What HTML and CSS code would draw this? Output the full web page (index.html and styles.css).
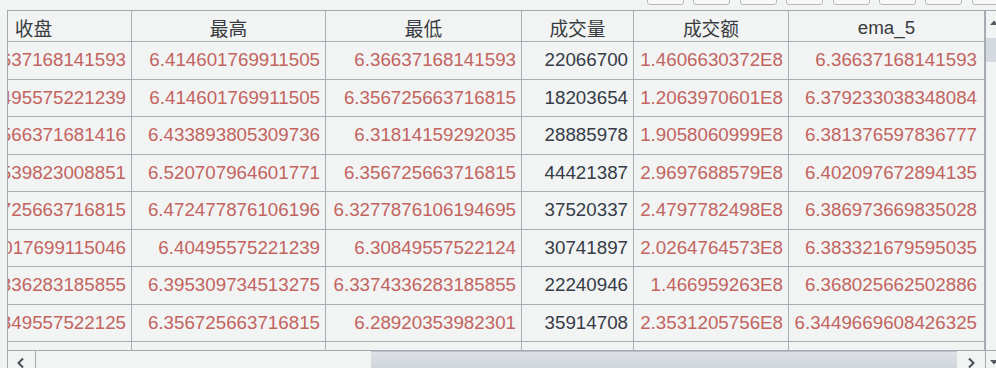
FILE: index.html
```html
<!DOCTYPE html>
<html lang="zh">
<head>
<meta charset="utf-8">
<title>行情数据</title>
<link rel="stylesheet" href="styles.css">
</head>
<body>
<div class="toolbar">
  <span class="tb-btn"></span><span class="tb-btn"></span><span class="tb-btn"></span><span class="tb-btn"></span>
  <span class="tb-btn"></span><span class="tb-btn"></span><span class="tb-btn"></span><span class="tb-btn"></span>
</div>
<div class="pane">
  <div class="viewport">
    <table class="grid">
      <thead>
        <tr>
          <th class="w-close">收盘</th>
          <th class="w-high">最高</th>
          <th class="w-low">最低</th>
          <th class="w-vol">成交量</th>
          <th class="w-amt">成交额</th>
          <th class="w-ema">ema_5</th>
        </tr>
      </thead>
      <tbody>
        <tr><td>6.36637168141593</td><td>6.414601769911505</td><td>6.36637168141593</td><td class="vol">22066700</td><td>1.4606630372E8</td><td class="last">6.36637168141593</td></tr>
        <tr><td>6.40495575221239</td><td>6.414601769911505</td><td>6.356725663716815</td><td class="vol">18203654</td><td>1.2063970601E8</td><td class="last">6.379233038348084</td></tr>
        <tr><td>6.38566371681416</td><td>6.433893805309736</td><td>6.31814159292035</td><td class="vol">28885978</td><td>1.9058060999E8</td><td class="last">6.381376597836777</td></tr>
        <tr><td>6.443539823008851</td><td>6.520707964601771</td><td>6.356725663716815</td><td class="vol">44421387</td><td>2.9697688579E8</td><td class="last">6.402097672894135</td></tr>
        <tr><td>6.356725663716815</td><td>6.472477876106196</td><td>6.3277876106194695</td><td class="vol">37520337</td><td>2.4797782498E8</td><td class="last">6.386973669835028</td></tr>
        <tr><td>6.376017699115046</td><td>6.40495575221239</td><td>6.30849557522124</td><td class="vol">30741897</td><td>2.0264764573E8</td><td class="last">6.383321679595035</td></tr>
        <tr><td>6.3374336283185855</td><td>6.395309734513275</td><td>6.3374336283185855</td><td class="vol">22240946</td><td>1.466959263E8</td><td class="last">6.368025662502886</td></tr>
        <tr><td>6.298849557522125</td><td>6.356725663716815</td><td>6.28920353982301</td><td class="vol">35914708</td><td>2.3531205756E8</td><td class="last">6.3449669608426325</td></tr>
        <tr><td>6.318141592920354</td><td>6.347079646017699</td><td>6.28920353982301</td><td class="vol">26411523</td><td>1.6876431982E8</td><td class="last">6.336025171535206</td></tr>
      </tbody>
    </table>
  </div>
  <div class="vscroll">
    <div class="vbtn-up">
      <svg width="8" height="5" viewBox="0 0 8 5"><polygon points="0,5 4,0.5 8,5" fill="#555b60"/></svg>
    </div>
    <div class="vtrack"><div class="vthumb"></div></div>
    <div class="vbtn-down">
      <svg width="8" height="5" viewBox="0 0 8 5"><polygon points="0,0 8,0 4,4.5" fill="#555b60"/></svg>
    </div>
  </div>
  <div class="hscroll">
    <div class="hbtn hbtn-left">
      <svg width="9" height="12" viewBox="0 0 9 12"><polyline points="7,1.5 2.5,6 7,10.5" fill="none" stroke="#4a4f54" stroke-width="2"/></svg>
    </div>
    <div class="htrack"><div class="hthumb"></div></div>
    <div class="hbtn hbtn-right">
      <svg width="9" height="12" viewBox="0 0 9 12"><polyline points="2,1.5 6.5,6 2,10.5" fill="none" stroke="#4a4f54" stroke-width="2"/></svg>
    </div>
  </div>
</div>
</body>
</html>
```
FILE: styles.css
```css
* {
  box-sizing: border-box;
}

html,
body {
  margin: 0;
  height: 100%;
  overflow: hidden;
  background: #f2f3f3;
}

body {
  font-family: "Liberation Sans", "Noto Sans CJK SC", sans-serif;
  font-size: 18.75px;
  color: #333333;
}

/* bottoms of the toolbar buttons above the table */
.toolbar {
  display: flex;
  align-items: flex-end;
  gap: 9.4px;
  height: 5px;
  padding-left: 647px;
  margin-bottom: 5px;
  overflow: hidden;
}

.tb-btn {
  flex: 0 0 37px;
  height: 24px;
  border: 1px solid #b5b9bc;
  border-radius: 3px;
  background: #f8f8f8;
}

/* scroll pane */
.pane {
  margin-left: 7px;
  width: max-content;
  display: grid;
  grid-template-columns: 977px 17px;
  grid-template-rows: 339px 18px;
  border-left: 1px solid #a3a9ae;
  border-top: 1px solid #a3a9ae;
}

.viewport {
  grid-column: 1;
  grid-row: 1;
  overflow: hidden;
}

.grid {
  margin-left: -72px;
  width: 1049px;
  table-layout: fixed;
  border-collapse: separate;
  border-spacing: 0;
}

.grid th,
.grid td {
  border-right: 1px solid #a8aeb3;
  border-bottom: 1px solid #a8aeb3;
  white-space: nowrap;
  padding: 0 5px;
}

.grid th {
  height: 30px;
  padding-top: 3px;
  font-weight: normal;
  text-align: center;
  color: #383c40;
}

.grid td {
  height: 37.5px;
  text-align: right;
  color: #c2645f;
}

.grid td.vol {
  color: #353c47;
}

.grid td.last {
  padding-right: 7px;
}

.w-close { width: 196px; }
.w-high  { width: 194px; }
.w-low   { width: 196px; }
.w-vol   { width: 112px; }
.w-amt   { width: 155px; }
.w-ema   { width: 196px; }

/* vertical scrollbar */
.vscroll {
  grid-column: 2;
  grid-row: 1 / 3;
  border-left: 1px solid #a3a9ae;
  display: flex;
  flex-direction: column;
}

.vbtn-up {
  height: 27px;
  display: flex;
  justify-content: center;
  padding-top: 9px;
}

.vtrack {
  flex: 1;
}

.vthumb {
  height: 24px;
  background: #d4dadf;
}

.vbtn-down {
  height: 18px;
  border-top: 1px solid #a3a9ae;
  display: flex;
  justify-content: center;
  padding-top: 9px;
}

/* horizontal scrollbar */
.hscroll {
  grid-column: 1;
  grid-row: 2;
  border-top: 1px solid #a3a9ae;
  display: flex;
}

.hbtn {
  flex: 0 0 28px;
  display: flex;
  justify-content: center;
  padding-top: 6px;
}

.hbtn-left {
  border-right: 1px solid #a3a9ae;
  padding-right: 3px;
}

.htrack {
  flex: 1;
  display: flex;
}

.hthumb {
  margin-left: auto;
  width: 586px;
  border-top: 1px solid #b9c0c6;
  background: linear-gradient(#dde1e5, #cfd5da);
}
```
